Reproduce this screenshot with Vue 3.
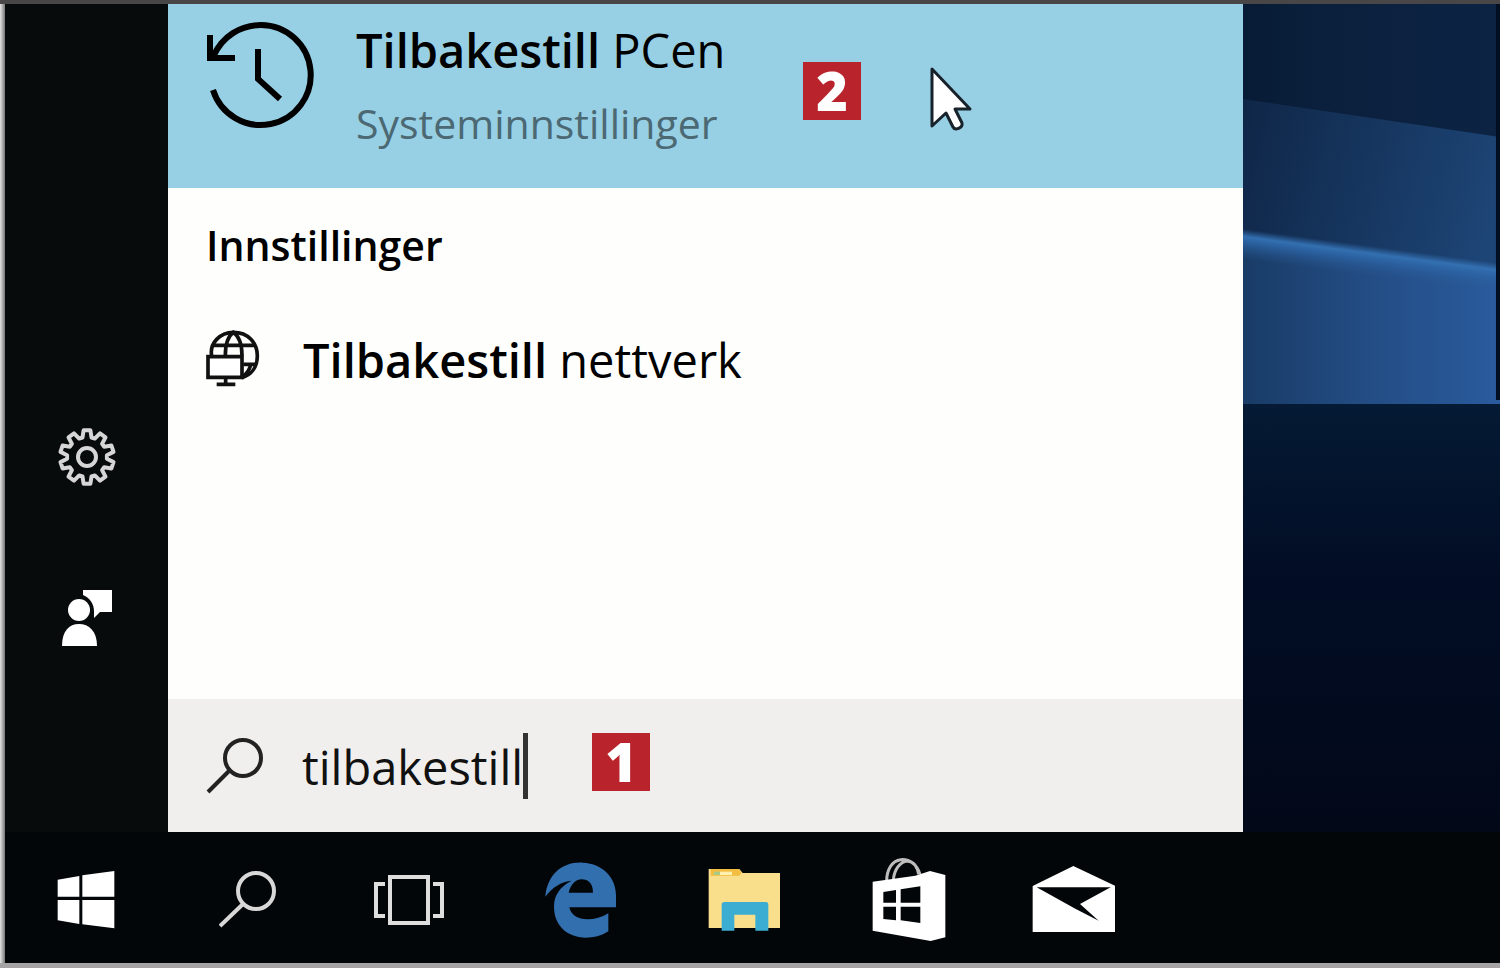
<template>
  <div class="screen">
    <div class="workspace">
      <nav class="rail" aria-label="Start">
        <button class="rail-button" type="button" aria-label="Innstillinger">
          <svg width="60" height="60" viewBox="-30 -30 60 60" fill="none" stroke="#d6d6d6">
            <path :d="gearPath" stroke-width="4" stroke-linejoin="round" />
            <circle r="9" stroke-width="4" />
          </svg>
        </button>
        <button class="rail-button" type="button" aria-label="Tilbakemelding">
          <svg width="52" height="58" viewBox="0 0 52 58" fill="#fff">
            <path d="M22 1h29v22H39l-6 6v-7c0-7-4-13-11-16z" />
            <circle cx="18" cy="21" r="11" />
            <path d="M1 57C1 42 8 35 18 35s18 7 18 22z" />
          </svg>
        </button>
      </nav>

      <main class="panel">
        <a class="best-match" href="#">
          <svg class="history-icon" width="112" height="112" viewBox="0 0 112 112" fill="none" stroke="#000" stroke-width="6">
            <path d="M7 37C16 16 35 5 55 5a50 50 0 1 1-48 65" />
            <path d="M4 15v23h25" />
            <path d="M52 29v30l22 20" />
          </svg>
          <span class="match-text">
            <span class="title"><b>{{ query.term }}</b> PCen</span>
            <span class="subtitle">Systeminnstillinger</span>
          </span>
          <span class="step step-two">2</span>
          <svg class="pointer" width="44" height="68" viewBox="0 0 44 68">
            <path d="M3 4v57l14-13 7 14c2 4 10 1 9-4l-7-14h15z" fill="#fff" stroke="#18222b" stroke-width="3" stroke-linejoin="round" />
          </svg>
        </a>

        <section class="results">
          <h2>Innstillinger</h2>
          <a class="result" href="#">
            <svg width="54" height="60" viewBox="78 355 162 180" fill="none" stroke="#111" stroke-width="11">
              <path d="M95 432C88 395 120 362 160 362c45 0 72 32 72 70 0 34-18 58-47 66" />
              <path d="M100 401h124M136 432c0-34 8-58 24-70 17 12 26 36 26 70M190 458h38M190 494c12-10 20-22 22-36" />
              <path d="M84 435h102v62H84z" fill="#fff" />
              <path d="M137 497v18M110 518h56" />
            </svg>
            <span class="title"><b>{{ query.term }}</b> nettverk</span>
          </a>
        </section>

        <div class="search">
          <svg width="58" height="58" viewBox="0 0 58 58" fill="none" stroke="#222" stroke-width="4">
            <circle cx="37" cy="21" r="18" />
            <path d="M24 33L2 55" />
          </svg>
          <label class="field">
            <input v-model="query.text" type="text" aria-label="Søk" />
            <span class="caret"></span>
            <span class="step step-one">1</span>
          </label>
        </div>
      </main>

      <aside class="wallpaper">
        <svg viewBox="0 0 256 828" preserveAspectRatio="none">
          <defs>
            <linearGradient id="sky" x1="0" x2="1">
              <stop offset="0" stop-color="#071b36" />
              <stop offset=".3" stop-color="#0b203c" />
              <stop offset="1" stop-color="#0c2344" />
            </linearGradient>
            <linearGradient id="haze" x1="0" x2="1" y2=".3">
              <stop offset="0" stop-color="#0f2647" />
              <stop offset="1" stop-color="#1d4576" />
            </linearGradient>
            <linearGradient id="light" x1="0" x2="1">
              <stop offset="0" stop-color="#193c66" />
              <stop offset=".4" stop-color="#224a80" />
              <stop offset="1" stop-color="#2a5b9d" />
            </linearGradient>
            <linearGradient id="glow" gradientUnits="userSpaceOnUse" x1="128" y1="242" x2="124" y2="272">
              <stop offset="0" stop-color="#346fb0" stop-opacity="0" />
              <stop offset=".25" stop-color="#3370b1" />
              <stop offset=".45" stop-color="#2d66a8" stop-opacity=".8" />
              <stop offset="1" stop-color="#28578f" stop-opacity="0" />
            </linearGradient>
            <linearGradient id="night" x2="0" y2="1">
              <stop offset="0" stop-color="#051a34" />
              <stop offset=".4" stop-color="#020d25" />
              <stop offset="1" stop-color="#020818" />
            </linearGradient>
          </defs>
          <path d="M0 400h256v428H0z" fill="url(#night)" />
          <path d="M0 0h256v400H0z" fill="url(#sky)" />
          <path d="M0 95L256 133V400H0z" fill="url(#haze)" />
          <path d="M0 233L256 265V400H0z" fill="url(#light)" />
          <path d="M0 220L256 250V310L0 280z" fill="url(#glow)" />
          <path d="M252 0h4v396h-4z" fill="#020e22" />
        </svg>
      </aside>
    </div>

    <footer class="taskbar">
      <div class="system">
        <button type="button" aria-label="Start">
          <svg width="58" height="58" viewBox="82 92 174 174" fill="#fff">
            <path d="M84 118l65-11v62H84zM158 105l96-13v77h-96zM84 179h65v72l-65-11zM158 179h96v85l-96-12z" />
          </svg>
        </button>
        <button type="button" aria-label="Søk">
          <svg width="58" height="58" viewBox="0 0 58 58" fill="none" stroke="#d8d8d8" stroke-width="4">
            <circle cx="37" cy="20" r="18" />
            <path d="M24 33L1 55" />
          </svg>
        </button>
        <button type="button" aria-label="Oppgavevisning">
          <svg width="72" height="52" viewBox="0 0 72 52" fill="none" stroke="#dedede" stroke-width="4">
            <path d="M16 3h38v46H16zM11 10H2v32h9M59 10h9v32h-9" />
          </svg>
        </button>
      </div>
      <div class="apps">
        <button type="button" aria-label="Edge">
          <svg width="72" height="76" viewBox="45 66 216 228" fill="#316fae" fill-rule="evenodd">
            <path d="M46 170C52 105 95 65 158 68c62 2 100 47 100 97v37H118c4 23 27 36 54 36 23 0 43-6 63-18v54c-20 14-45 19-67 19-58-1-96-38-96-93 0-35 18-60 53-78-30 3-57 18-79 48zM116 158h73c0-28-14-40-34-40s-33 17-39 40z" />
          </svg>
        </button>
        <button type="button" aria-label="Filutforsker">
          <svg width="74" height="64" viewBox="534 84 222 192">
            <path d="M536 87h92l10 12h112v165H536z" fill="#f9df8b" />
            <path d="M542 87h84l9 12-8 8h-85z" fill="#f3bd42" />
            <path d="M570 95h36v10h-36z" fill="#fff0b0" />
            <path d="M552 95h18v10h-18z" fill="#a8ca84" />
            <path d="M575 272v-78q0-8 8-8h124q8 0 8 8v78h-39v-48h-63v48z" fill="#3badd2" />
          </svg>
        </button>
        <button type="button" aria-label="Butikk">
          <svg width="74" height="86" viewBox="64 50 222 258">
            <path d="M108 122c0-34 16-61 42-64 28-3 50 16 58 44M128 120c2-32 20-56 42-58 22 2 30 18 34 40" fill="none" stroke="#bdbdbd" stroke-width="9" />
            <path d="M66 124l128-18 44-14 46 12v187l-44 11-174-31z" fill="#fff" />
            <path d="M98 155l38-6v38H98zM150 147l59-9v49h-59zM98 199h38v41l-38-4zM150 199h59v49l-59-8z" fill="#030608" />
          </svg>
        </button>
        <button type="button" aria-label="E-post">
          <svg width="84" height="68" viewBox="545 74 252 204">
            <path d="M550 134l122-60 126 60v138H550z" fill="#fff" />
            <path d="M562 138h222l-92 50 56 50-70-36z" fill="#030608" />
          </svg>
        </button>
      </div>
    </footer>
  </div>
</template>

<script setup>
import { reactive } from 'vue'

const query = reactive({
  text: 'tilbakestill',
  term: 'Tilbakestill',
})

// Outline of a cog: each tooth is two outer and two inner points
const teeth = 10
const gearPoints = []
for (let i = 0; i < teeth; i++) {
  const step = (Math.PI * 2) / teeth
  const mid = i * step + step / 2
  const corners = [
    [20, -0.36],
    [27, -0.2],
    [27, 0.2],
    [20, 0.36],
  ]
  corners.forEach(([radius, offset]) => {
    const angle = mid + offset * step
    gearPoints.push(`${(radius * Math.cos(angle)).toFixed(1)} ${(radius * Math.sin(angle)).toFixed(1)}`)
  })
}
const gearPath = `M${gearPoints.join('L')}Z`
</script>

<style>
body {
  margin: 0;
}
</style>

<style scoped>
.screen {
  box-sizing: border-box;
  display: flex;
  flex-direction: column;
  min-height: 100vh;
  padding-left: 5px;
  border-top: 4px solid #484647;
  border-bottom: 5px solid #a5a3a4;
  background: linear-gradient(90deg, #e4e4e4, #777 5px, #030608 5px);
  font-family: "Open Sans", "Noto Sans", sans-serif;
  color: #000;
}

button {
  display: flex;
  align-items: center;
  justify-content: center;
  padding: 0;
  border: 0;
  background: none;
}

a {
  color: inherit;
  text-decoration: none;
}

svg {
  flex: none;
}

.workspace {
  flex: 1;
  display: flex;
}

.rail {
  box-sizing: border-box;
  display: flex;
  flex-direction: column;
  justify-content: flex-end;
  width: 163px;
  padding-bottom: 134px;
  background: #070b0c;
}

.rail-button {
  height: 161px;
}

.panel {
  flex: 1;
  display: flex;
  flex-direction: column;
  background: #fefefd;
}

.best-match {
  position: relative;
  display: flex;
  align-items: flex-start;
  gap: 38px;
  height: 168px;
  padding: 16px 38px 0;
  background: #97cfe4;
}

.match-text {
  display: flex;
  flex-direction: column;
  gap: 16px;
}

.title {
  font-size: 47px;
  line-height: 60px;
}

.title b {
  font-weight: 600;
}

.subtitle {
  font-size: 41px;
  line-height: 54px;
  color: #4b6873;
}

.step {
  position: absolute;
  width: 58px;
  height: 58px;
  background: #b9232b;
  color: #fff;
  font-size: 54px;
  font-weight: 800;
  line-height: 56px;
  text-align: center;
}

.step-two {
  top: 58px;
  left: 635px;
}

.pointer {
  position: absolute;
  top: 61px;
  left: 761px;
}

.results {
  flex: 1;
  padding: 30px 38px;
}

h2 {
  margin: 0;
  font-size: 41px;
  font-weight: 600;
  line-height: 54px;
}

.result {
  display: flex;
  align-items: center;
  gap: 43px;
  margin-top: 58px;
}

.search {
  display: flex;
  align-items: center;
  gap: 38px;
  height: 133px;
  padding: 0 38px;
  background: #f0efee;
}

.field {
  position: relative;
  flex: 1;
}

input {
  box-sizing: border-box;
  display: block;
  width: 100%;
  height: 66px;
  padding: 2px 0 0;
  border: 0;
  outline: 0;
  background: none;
  color: #111;
  font: 47px/64px "Open Sans", "Noto Sans", sans-serif;
}

.caret {
  position: absolute;
  top: 0;
  left: 221px;
  width: 5px;
  height: 66px;
  background: #333;
}

.step-one {
  top: 0;
  left: 290px;
}

.wallpaper {
  position: relative;
  width: 257px;
  background: #020818;
}

.wallpaper svg {
  position: absolute;
  width: 100%;
  height: 100%;
}

.taskbar {
  box-sizing: border-box;
  display: flex;
  gap: 8px;
  height: 131px;
  padding-top: 4px;
  background: #030608;
}

.system,
.apps {
  display: flex;
}

.system button {
  width: 162px;
}

.apps button {
  width: 164px;
}
</style>
